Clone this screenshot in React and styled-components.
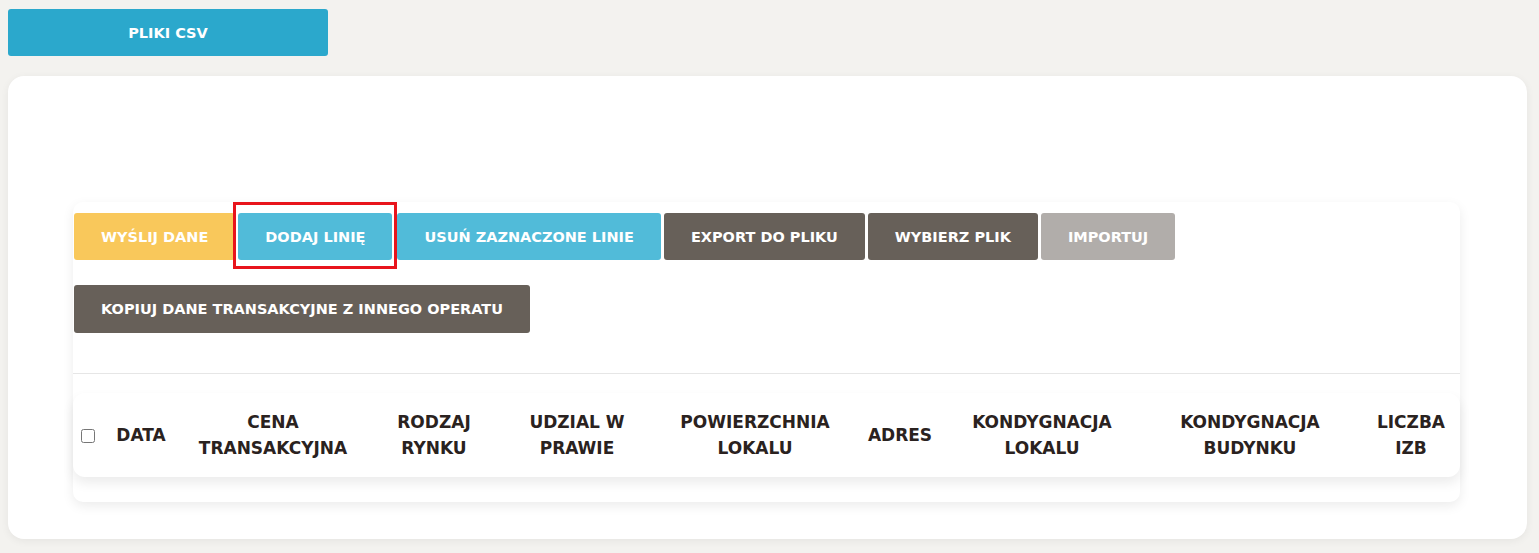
import styled, { createGlobalStyle } from 'styled-components';

const GlobalStyle = createGlobalStyle`
  body {
    margin: 0;
    background: #f3f2ef;
    font-family: 'DejaVu Sans', 'Noto Sans', sans-serif;
  }
`;

const Page = styled.div`
  padding: 9px 12px 14px 8px;
  display: flex;
  flex-direction: column;
  align-items: flex-start;
  gap: 20px;
`;

const TopButton = styled.button`
  width: 320px;
  height: 47px;
  border: none;
  border-radius: 3px;
  background: #2ba8cc;
  color: #fff;
  font-family: inherit;
  font-weight: 700;
  font-size: 14.5px;
  cursor: pointer;
`;

const Card = styled.div`
  align-self: stretch;
  background: #fff;
  border-radius: 16px;
  box-shadow: 0 2px 8px rgba(0, 0, 0, 0.06);
  padding: 126px 67px 37px 65px;
`;

const Panel = styled.div`
  border-radius: 10px;
  box-shadow: 0 4px 12px rgba(0, 0, 0, 0.08);
  padding: 11px 0 25px 0;
  display: flex;
  flex-direction: column;
`;

const ButtonRow = styled.div`
  display: flex;
  gap: 3px;
  padding-left: 1px;
  margin-bottom: ${(p) => p.$mb || 0}px;
`;

const colors = {
  yellow: '#f9c85b',
  blue: '#51bbd9',
  dark: '#676059',
  grey: '#b1adaa',
};

const ActionButton = styled.button`
  position: relative;
  height: ${(p) => (p.$tall ? 48 : 47)}px;
  padding: 0 27px;
  border: none;
  border-radius: 3px;
  background: ${(p) => colors[p.$color]};
  color: #fff;
  font-family: inherit;
  font-weight: 700;
  font-size: 14.5px;
  white-space: nowrap;
  cursor: pointer;
  margin-right: ${(p) => (p.$highlight ? 2 : 0)}px;

  ${(p) =>
    p.$highlight &&
    `
    &::after {
      content: '';
      position: absolute;
      top: -11px;
      bottom: -9px;
      left: -5px;
      right: -5px;
      border: 3px solid #e8141c;
      pointer-events: none;
    }
  `}
`;

const Divider = styled.div`
  height: 1px;
  background: #e6e6e6;
  margin-top: 40px;
`;

const TableCard = styled.div`
  margin-top: 19px;
  border-radius: 12px;
  box-shadow: 0 6px 12px rgba(0, 0, 0, 0.08);
  background: #fff;
`;

const Table = styled.table`
  width: 100%;
  border-collapse: collapse;
  table-layout: fixed;
`;

const Th = styled.th`
  height: 84px;
  padding: 0;
  font-size: 17px;
  line-height: 26px;
  font-weight: 700;
  color: #2a2220;
  text-align: center;
  vertical-align: middle;
`;

const CheckTh = styled(Th)`
  text-align: left;
  padding-left: 8px;

  input {
    margin: 0;
    width: 14px;
    height: 14px;
    vertical-align: middle;
  }
`;

const columns = [
  { w: 70, label: ['DATA'] },
  { w: 194, label: ['CENA', 'TRANSAKCYJNA'] },
  { w: 128, label: ['RODZAJ', 'RYNKU'] },
  { w: 158, label: ['UDZIAL W', 'PRAWIE'] },
  { w: 198, label: ['POWIERZCHNIA', 'LOKALU'] },
  { w: 92, label: ['ADRES'] },
  { w: 192, label: ['KONDYGNACJA', 'LOKALU'] },
  { w: 224, label: ['KONDYGNACJA', 'BUDYNKU'] },
  { w: 98, label: ['LICZBA', 'IZB'] },
];

export default function App() {
  return (
    <>
      <GlobalStyle />
      <Page>
        <TopButton>PLIKI CSV</TopButton>
        <Card>
          <Panel>
            <ButtonRow $mb={25}>
              <ActionButton $color="yellow">WYŚLIJ DANE</ActionButton>
              <ActionButton $color="blue" $highlight>
                DODAJ LINIĘ
              </ActionButton>
              <ActionButton $color="blue">USUŃ ZAZNACZONE LINIE</ActionButton>
              <ActionButton $color="dark">EXPORT DO PLIKU</ActionButton>
              <ActionButton $color="dark">WYBIERZ PLIK</ActionButton>
              <ActionButton $color="grey">IMPORTUJ</ActionButton>
            </ButtonRow>
            <ButtonRow>
              <ActionButton $color="dark" $tall>
                KOPIUJ DANE TRANSAKCYJNE Z INNEGO OPERATU
              </ActionButton>
            </ButtonRow>
            <Divider />
            <TableCard>
              <Table>
                <colgroup>
                  <col style={{ width: 33 }} />
                  {columns.map((c, i) => (
                    <col key={i} style={{ width: c.w }} />
                  ))}
                </colgroup>
                <thead>
                  <tr>
                    <CheckTh>
                      <input type="checkbox" />
                    </CheckTh>
                    {columns.map((c, i) => (
                      <Th key={i}>
                        {c.label.map((line, j) => (
                          <div key={j}>{line}</div>
                        ))}
                      </Th>
                    ))}
                  </tr>
                </thead>
              </Table>
            </TableCard>
          </Panel>
        </Card>
      </Page>
    </>
  );
}
